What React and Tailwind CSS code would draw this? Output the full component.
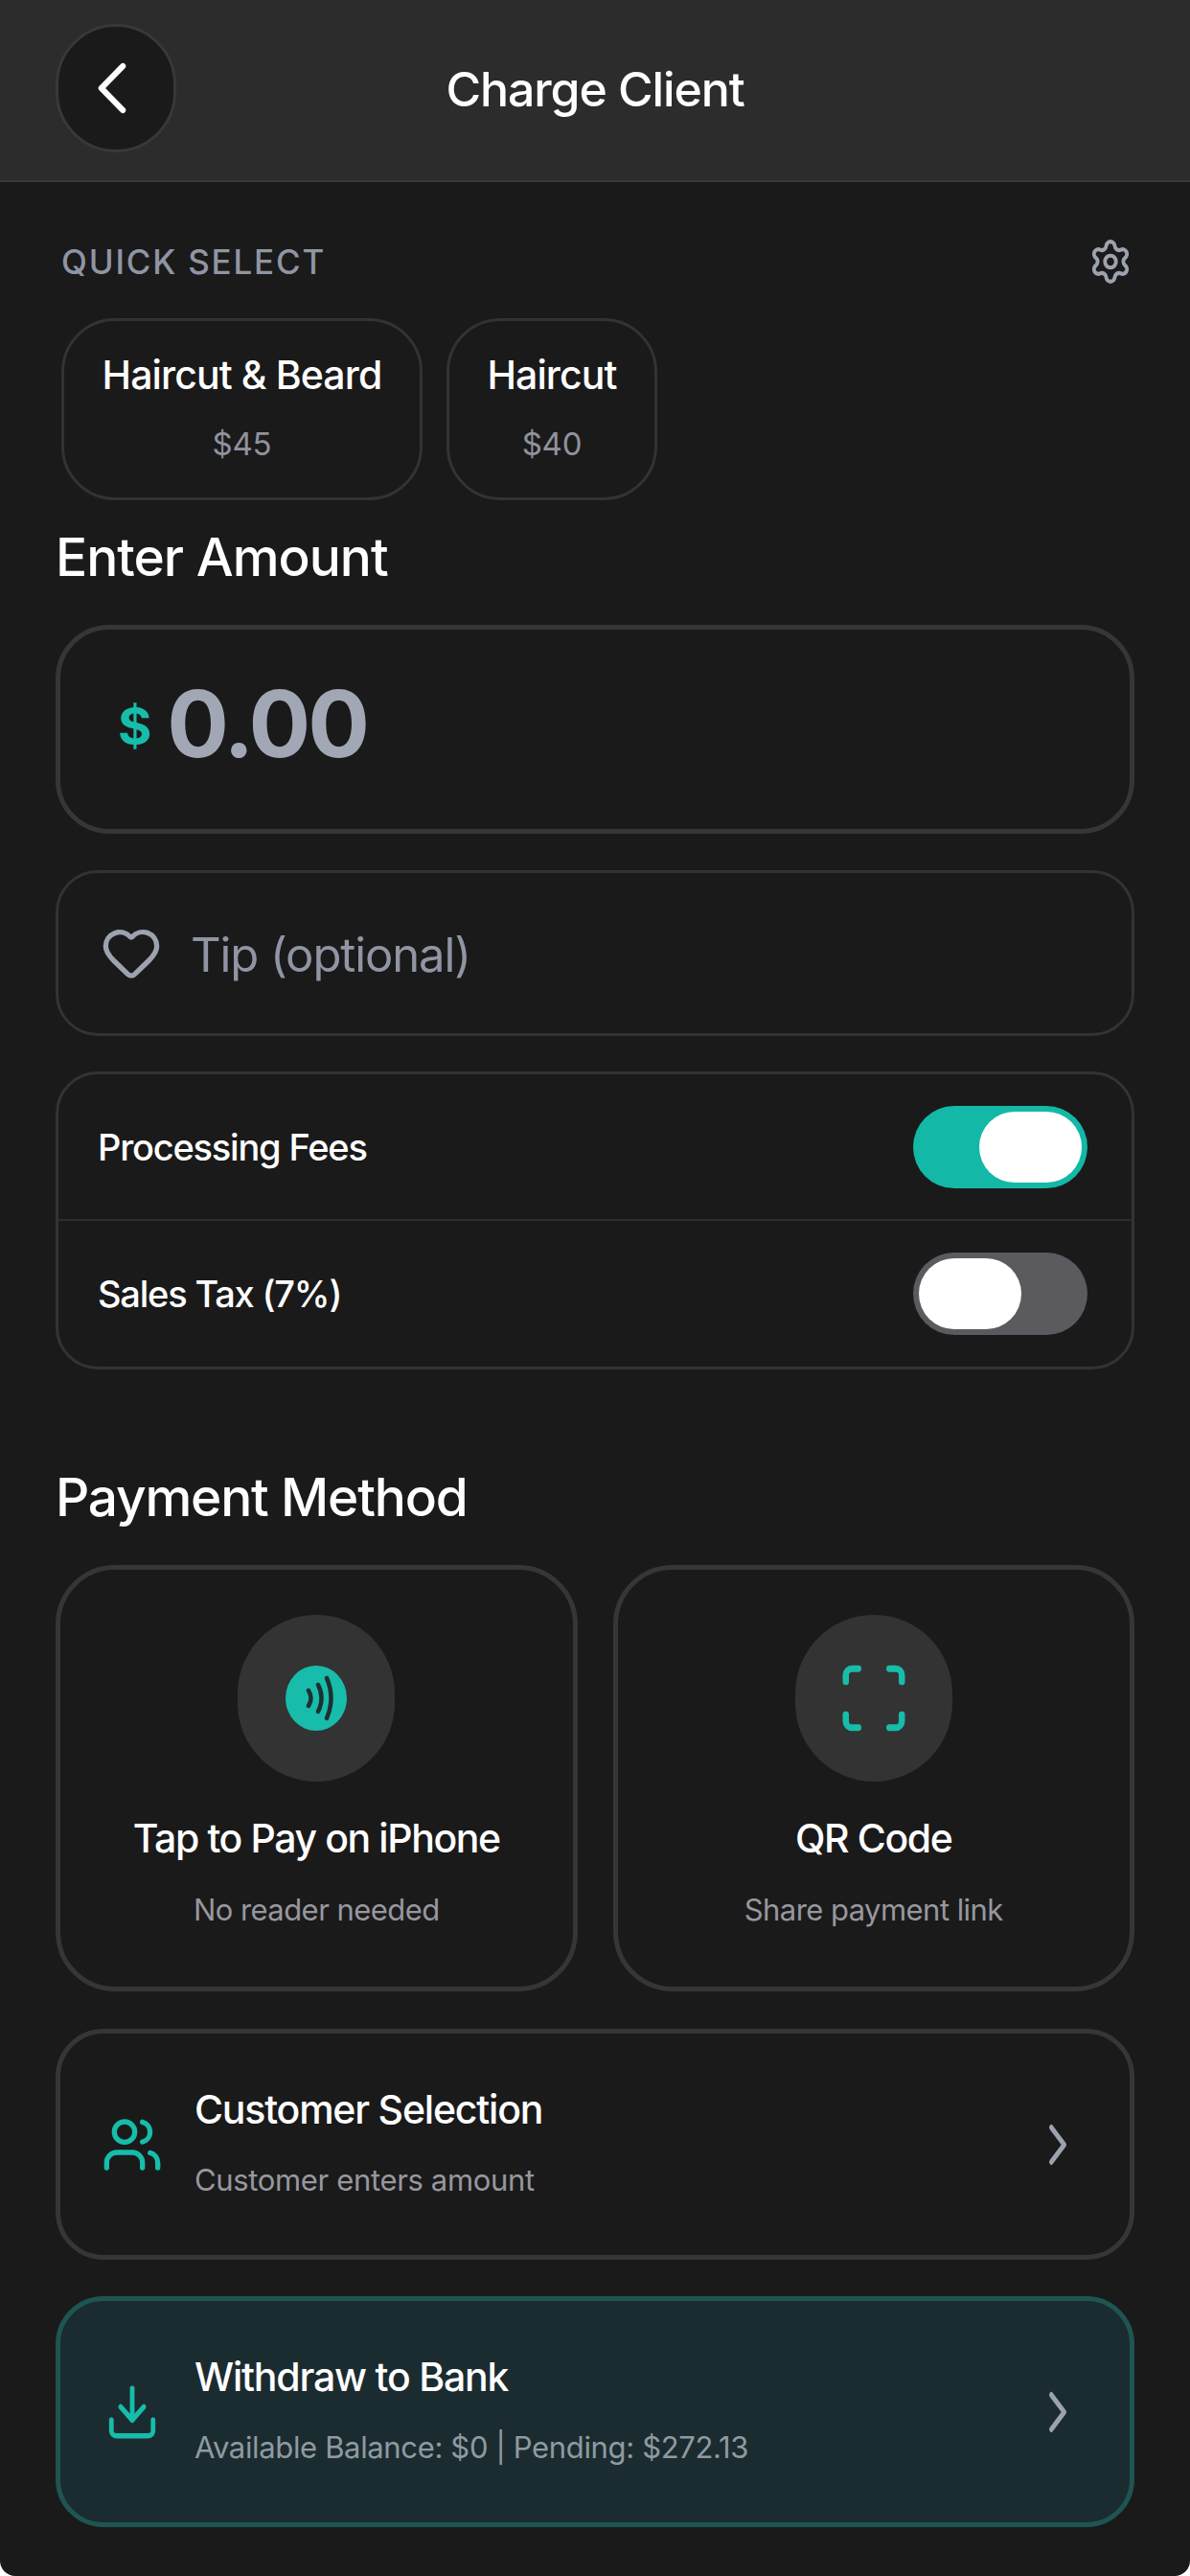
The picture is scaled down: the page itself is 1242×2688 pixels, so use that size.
import { ChevronLeft, ChevronRight, Download, Heart, Scan, Settings, Users } from 'lucide-react';

// ===== SMALL PIECES =====
const QuickChip = ({ name, price, width }) => (
  <button className={`${width} h-[190px] rounded-[56px] border-[3px] border-[#333333] flex flex-col items-center`}>
    <span className="mt-[28px] text-[41px] leading-[56px] tracking-[-0.9px] font-medium text-white">{name}</span>
    <span className="mt-[22px] text-[33px] leading-[44px] tracking-[-0.2px] text-[#8f929c]">{price}</span>
  </button>
);

const Toggle = ({ on }) => (
  <div className={`w-[182px] h-[86px] rounded-full p-[6px] flex ${on ? 'bg-[#14b8a6] justify-end' : 'bg-[#5a5a5f] justify-start'}`}>
    <div className="w-[107px] h-[74px] rounded-full bg-white" />
  </div>
);

const TapIcon = () => (
  <svg viewBox="0 0 64 68" className="w-[64px] h-[68px]">
    <ellipse cx="32" cy="34" rx="32" ry="34" fill="#17bcaa" />
    <g fill="none" stroke="#1f2f30" strokeWidth="4.5" strokeLinecap="round">
      <path d="M24 26q5 8 0 16" />
      <path d="M34 20q7 14 0 28" />
      <path d="M43 13q9 21 0 42" />
    </g>
  </svg>
);

const MethodCard = ({ icon, title, subtitle }) => (
  <div className="h-[445px] rounded-[62px] border-[5px] border-[#363636] flex flex-col items-center">
    <div className="mt-[47px] w-[164px] h-[174px] rounded-full bg-[#333333] flex items-center justify-center">{icon}</div>
    <div className="mt-[31px] text-[41px] leading-[56px] tracking-[-1.4px] font-medium text-white">{title}</div>
    <div className="mt-[25px] text-[31px] leading-[44px] tracking-[-0.55px] text-[#97979e]">{subtitle}</div>
  </div>
);

const RowCard = ({ icon, title, subtitle, tone, subColor }) => (
  <div className={`h-[241px] rounded-[50px] border-[5px] flex items-center pl-[43px] pr-[65px] ${tone}`}>
    <div className="w-[70px] flex justify-center shrink-0 -ml-[3px] mr-[3px]">{icon}</div>
    <div className="ml-[27px] flex-1 -mt-[6px]">
      <div className="text-[41px] leading-[56px] tracking-[-1.2px] font-medium text-white">{title}</div>
      <div className={`mt-[24px] text-[31px] leading-[44px] tracking-[-0.35px] ${subColor}`}>{subtitle}</div>
    </div>
    <ChevronRight preserveAspectRatio="none" strokeWidth={2} className="w-[54px] h-[72px] -mr-[17px] text-[#9ca3af]" />
  </div>
);

// ===== SCREEN =====
export default function App() {
  return (
    <div className="w-[1242px] h-[2688px] bg-[#1a1a1a] overflow-hidden rounded-b-[16px] font-['Inter',sans-serif]">
      <header className="h-[190px] bg-[#2c2c2c] border-b-2 border-[#3a3a3a] flex items-center px-[58px] relative">
        <button className="w-[126px] h-[134px] -mt-[4px] rounded-full bg-[#1a1a1a] border-[3px] border-[#383838] flex items-center justify-center">
          <ChevronLeft preserveAspectRatio="none" strokeWidth={1.6} className="w-[90px] h-[92px] -ml-[8px] text-white" />
        </button>
        <h1 className="flex-1 text-center -ml-[126px] -mt-[3px] text-[50px] leading-[60px] tracking-[-1.1px] font-medium text-white">Charge Client</h1>
      </header>

      <main className="px-[58px]">
        <div className="mt-[58px] pl-[6px] flex items-center justify-between">
          <span className="text-[35px] leading-[44px] font-medium tracking-[1.8px] text-[#8f95a3]">QUICK SELECT</span>
          <Settings preserveAspectRatio="none" strokeWidth={2} className="w-[46px] h-[50px] mr-[2px] text-[#9ca3af]" />
        </div>
        <div className="mt-[34px] pl-[6px] flex gap-[25px]">
          <QuickChip name="Haircut & Beard" price="$45" width="w-[377px]" />
          <QuickChip name="Haircut" price="$40" width="w-[220px]" />
        </div>

        <h2 className="mt-[25px] text-[55px] leading-[68px] tracking-[-1px] font-medium text-white">Enter Amount</h2>

        <div className="mt-[37px] h-[218px] rounded-[56px] border-[5px] border-[#363636] flex items-center pl-[60px]">
          <span className="-mt-[6px] text-[54px] leading-[70px] font-bold text-[#17bcaa]">$</span>
          <span className="ml-[16px] -mt-[13px] text-[96px] leading-[110px] tracking-[-3px] font-bold text-[#a1a7b5]">0.00</span>
        </div>

        <div className="mt-[38px] h-[173px] rounded-[44px] border-[3px] border-[#333333] flex items-center pl-[44px]">
          <Heart preserveAspectRatio="none" strokeWidth={2} className="w-[64px] h-[64px] -mt-[2px] text-[#9ca3af]" />
          <span className="ml-[30px] mt-[4px] text-[49px] leading-[60px] tracking-[-1.1px] text-[#8f95a3]">Tip (optional)</span>
        </div>

        <div className="mt-[37px] rounded-[44px] border-[3px] border-[#333333]">
          <div className="h-[153px] flex items-center justify-between pl-[41px] pr-[46px] border-b-2 border-[#2e2e2e]">
            <span className="text-[38px] leading-[48px] tracking-[-1.2px] font-medium text-white">Processing Fees</span>
            <Toggle on />
          </div>
          <div className="h-[152px] flex items-center justify-between pl-[41px] pr-[46px]">
            <span className="text-[38px] leading-[48px] tracking-[-1.2px] font-medium text-white">Sales Tax (7%)</span>
            <Toggle />
          </div>
        </div>

        <h2 className="mt-[99px] text-[55px] leading-[68px] tracking-[-1.2px] font-medium text-white">Payment Method</h2>

        <div className="mt-[37px] grid grid-cols-2 gap-[37px]">
          <MethodCard icon={<TapIcon />} title="Tap to Pay on iPhone" subtitle="No reader needed" />
          <MethodCard
            icon={<Scan preserveAspectRatio="none" strokeWidth={2} className="w-[78px] h-[82px] text-[#17bcaa]" />}
            title="QR Code"
            subtitle="Share payment link"
          />
        </div>

        <div className="mt-[39px] flex flex-col gap-[38px]">
          <RowCard
            icon={<Users preserveAspectRatio="none" strokeWidth={2} className="w-[64px] h-[64px] text-[#17bcaa]" />}
            title="Customer Selection"
            subtitle="Customer enters amount"
            tone="border-[#363636]"
            subColor="text-[#97979e]"
          />
          <RowCard
            icon={<Download preserveAspectRatio="none" strokeWidth={2} className="w-[58px] h-[66px] text-[#17bcaa]" />}
            title="Withdraw to Bank"
            subtitle="Available Balance: $0 | Pending: $272.13"
            tone="border-[#1f5551] bg-[#1b2c30]"
            subColor="text-[#8f9aa0]"
          />
        </div>
      </main>
    </div>
  );
}
